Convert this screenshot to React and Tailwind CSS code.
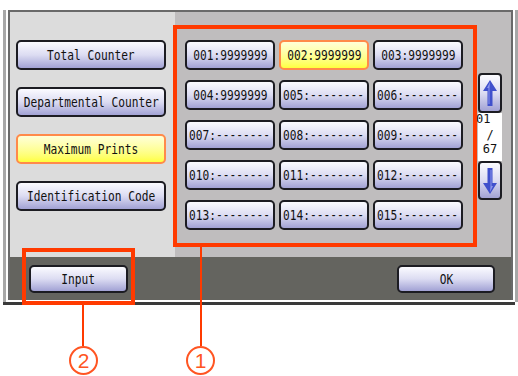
const font = { fontFamily: '"DejaVu Sans Mono", "Liberation Mono", monospace' }

const Btn = ({ label, active, className = '' }) => (
  <div
    className={`flex items-center justify-center rounded-[5px] border-2 ${
      active
        ? 'border-[#ff8a4a] bg-linear-to-b from-[#ffffd8] to-[#ffff3a]'
        : 'border-[#1c1c22] bg-linear-to-b from-[#fbfbff] via-[#dcdcf2] to-[#a2a2d4]'
    } ${className}`}
  >
    <span className="inline-block scale-x-[0.8] text-[14px] leading-none text-[#111] whitespace-nowrap" style={font}>
      {label}
    </span>
  </div>
)

const Arrow = ({ down }) => (
  <div className="flex h-full w-full items-center justify-center rounded-[4px] border-2 border-[#1c1c22] bg-linear-to-b from-[#fbfbff] via-[#dcdcf2] to-[#a2a2d4]">
    <svg width="16" height="28" viewBox="0 0 16 28" className={down ? 'rotate-180' : ''}>
      <path d="M8 1 L15 12 L10.5 12 L10.5 27 L5.5 27 L5.5 12 L1 12 Z" fill="#4050cc" />
      <path d="M8 3 L5 9 L6.5 9 L6.5 25 L7.5 25 L7.5 9 Z" fill="#8c96ec" />
    </svg>
  </div>
)

const cells = [
  '001:9999999', '002:9999999', '003:9999999',
  '004:9999999', '005:--------', '006:--------',
  '007:--------', '008:--------', '009:--------',
  '010:--------', '011:--------', '012:--------',
  '013:--------', '014:--------', '015:--------',
]

const Callout = ({ n, className }) => (
  <div className={`absolute flex h-[29px] w-[29px] items-center justify-center rounded-full border-2 border-[#ff5522] ${className}`}>
    <span className="text-[21px] leading-none text-[#ff5522]" style={{ fontFamily: '"Liberation Sans", Arial, sans-serif' }}>
      {n}
    </span>
  </div>
)

export default function App() {
  return (
    <div className="relative h-[376px] w-[518px] overflow-hidden bg-white">
      <div className="pl-[3px] pt-[10px]">
        <div className="w-[515px] border-x-[3px] border-[#a8a8a8] bg-white px-[2px] pb-[2px]">
          <div className="border-x-2 border-t-2 border-[#6a6a6a]">
            <div className="flex h-[245px]">
              {/* left menu */}
              <div className="flex w-[165px] flex-col gap-[17px] bg-[#dcdcdc] pl-[6px] pt-[28px]">
                <Btn label="Total Counter" className="h-[30px] w-[150px]" />
                <Btn label="Departmental Counter" className="h-[30px] w-[150px]" />
                <Btn label="Maximum Prints" active className="h-[30px] w-[150px]" />
                <Btn label="Identification Code" className="h-[30px] w-[150px]" />
              </div>

              {/* counters */}
              <div className="flex flex-1 bg-[#bfbdbe] pl-[10px] pt-[28px]">
                <div className="grid h-[190px] w-[278px] grid-cols-3 gap-x-[4px] gap-y-[10px]">
                  {cells.map((c, i) => (
                    <Btn key={c} label={c} active={i === 1} className="h-[30px]" />
                  ))}
                </div>
                <div className="ml-[15px] mt-[33px] flex w-[24px] flex-col">
                  <div className="h-[40px]"><Arrow /></div>
                  <div className="flex h-[48px] flex-col bg-white text-[12px] leading-[13px] text-[#111]" style={font}>
                    <span className="-ml-[2px]">01</span>
                    <span className="mt-[3px] text-center">/</span>
                    <span className="mt-[1px] text-center">67</span>
                  </div>
                  <div className="h-[39px]"><Arrow down /></div>
                </div>
              </div>
            </div>

            {/* footer */}
            <div className="flex h-[43px] items-start justify-between bg-[#64645f] pl-[19px] pr-[16px] pt-[8px]">
              <Btn label="Input" className="h-[28px] w-[99px]" />
              <Btn label="OK" className="h-[28px] w-[98px]" />
            </div>
          </div>
        </div>
        <div className="h-[3px] w-[512px] bg-[#3a3a3a]" />
      </div>

      {/* annotations */}
      <div className="absolute left-[173px] top-[25px] h-[222px] w-[304px] border-4 border-[#ff3a00]" />
      <div className="absolute left-[22px] top-[248px] h-[57px] w-[113px] border-4 border-[#ff3a00]" />
      <div className="absolute left-[200px] top-[247px] h-[99px] w-[2px] bg-[#ff3a00]" />
      <div className="absolute left-[82px] top-[305px] h-[41px] w-[2px] bg-[#ff3a00]" />
      <Callout n="2" className="left-[69px] top-[346px]" />
      <Callout n="1" className="left-[186px] top-[346px]" />
    </div>
  )
}
